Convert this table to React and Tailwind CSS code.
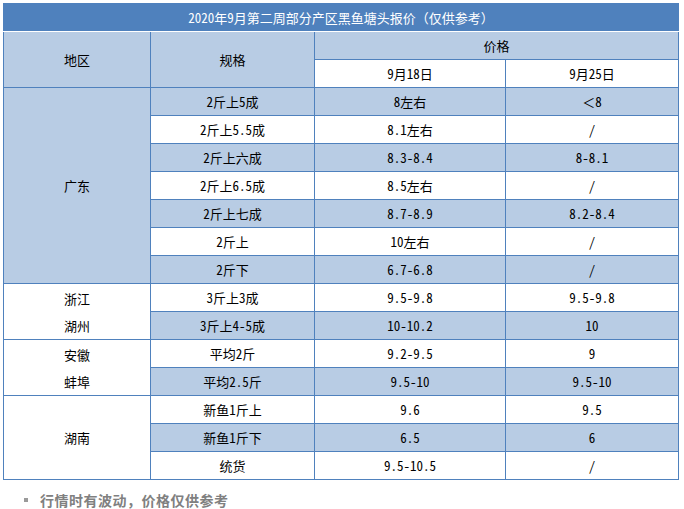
const rows = [
  { spec: "2斤上5成", a: "8左右", b: "＜8" },
  { spec: "2斤上5.5成", a: "8.1左右", b: "/" },
  { spec: "2斤上六成", a: "8.3-8.4", b: "8-8.1" },
  { spec: "2斤上6.5成", a: "8.5左右", b: "/" },
  { spec: "2斤上七成", a: "8.7-8.9", b: "8.2-8.4" },
  { spec: "2斤上", a: "10左右", b: "/" },
  { spec: "2斤下", a: "6.7-6.8", b: "/" },
  { spec: "3斤上3成", a: "9.5-9.8", b: "9.5-9.8" },
  { spec: "3斤上4-5成", a: "10-10.2", b: "10" },
  { spec: "平均2斤", a: "9.2-9.5", b: "9" },
  { spec: "平均2.5斤", a: "9.5-10", b: "9.5-10" },
  { spec: "新鱼1斤上", a: "9.6", b: "9.5" },
  { spec: "新鱼1斤下", a: "6.5", b: "6" },
  { spec: "统货", a: "9.5-10.5", b: "/" },
];

// region cells: start row index -> { span, lines, light }
const regions = {
  0: { span: 7, lines: ["广东"], light: true },
  7: { span: 2, lines: ["浙江", "湖州"] },
  9: { span: 2, lines: ["安徽", "蚌埠"] },
  11: { span: 3, lines: ["湖南"] },
};

const cell = "border-r border-b border-[#4f81bd] text-center align-middle p-0";

export default function App() {
  return (
    <div
      className="w-[684px] h-[509px] bg-white pt-[3px] pl-[3px] text-black"
      style={{ fontFamily: '"Noto Sans Mono CJK SC", "Liberation Mono", "Noto Sans CJK SC", monospace' }}
    >
      <div className="w-[676px] h-[29px] bg-[#4f81bd] border-b border-white flex items-center justify-center text-white text-[13px] leading-none">
        2020年9月第二周部分产区黑鱼塘头报价（仅供参考）
      </div>
      <table className="w-[676px] table-fixed border-separate border-spacing-0 border-l border-[#4f81bd] text-[13px] leading-none">
        <colgroup>
          <col className="w-[147px]" />
          <col className="w-[164px]" />
          <col className="w-[191px]" />
          <col className="w-[173px]" />
        </colgroup>
        <tbody>
          <tr className="h-[28px]">
            <td rowSpan={2} className={`${cell} bg-[#b8cce4]`}>地区</td>
            <td rowSpan={2} className={`${cell} bg-[#b8cce4]`}>规格</td>
            <td colSpan={2} className={`${cell} bg-[#b8cce4]`}>价格</td>
          </tr>
          <tr className="h-[28px]">
            <td className={`${cell} bg-white`}>9月18日</td>
            <td className={`${cell} bg-white`}>9月25日</td>
          </tr>
          {rows.map((r, i) => {
            const bg = i % 2 === 0 ? "bg-[#b8cce4]" : "bg-white";
            const reg = regions[i];
            return (
              <tr key={i} className="h-[28px]">
                {reg && (
                  <td
                    rowSpan={reg.span}
                    className={`${cell} ${reg.light ? "bg-[#b8cce4]" : "bg-white"}`}
                  >
                    {reg.lines.map((l) => (
                      <div key={l} className="leading-[27px]">{l}</div>
                    ))}
                  </td>
                )}
                <td className={`${cell} ${bg}`}>{r.spec}</td>
                <td className={`${cell} ${bg}`}>{r.a}</td>
                <td className={`${cell} ${bg}`}>{r.b}</td>
              </tr>
            );
          })}
        </tbody>
      </table>

      <div className="mt-[13px] ml-[21px] flex items-center gap-[12px]">
        <span className="block w-[4px] h-[4px] bg-[#9a9a9a]" />
        <span
          className="text-[14px] font-bold tracking-[0.5px] text-[#808080] leading-none"
          style={{ fontFamily: '"Noto Sans CJK SC", sans-serif' }}
        >
          行情时有波动，价格仅供参考
        </span>
      </div>
    </div>
  );
}
